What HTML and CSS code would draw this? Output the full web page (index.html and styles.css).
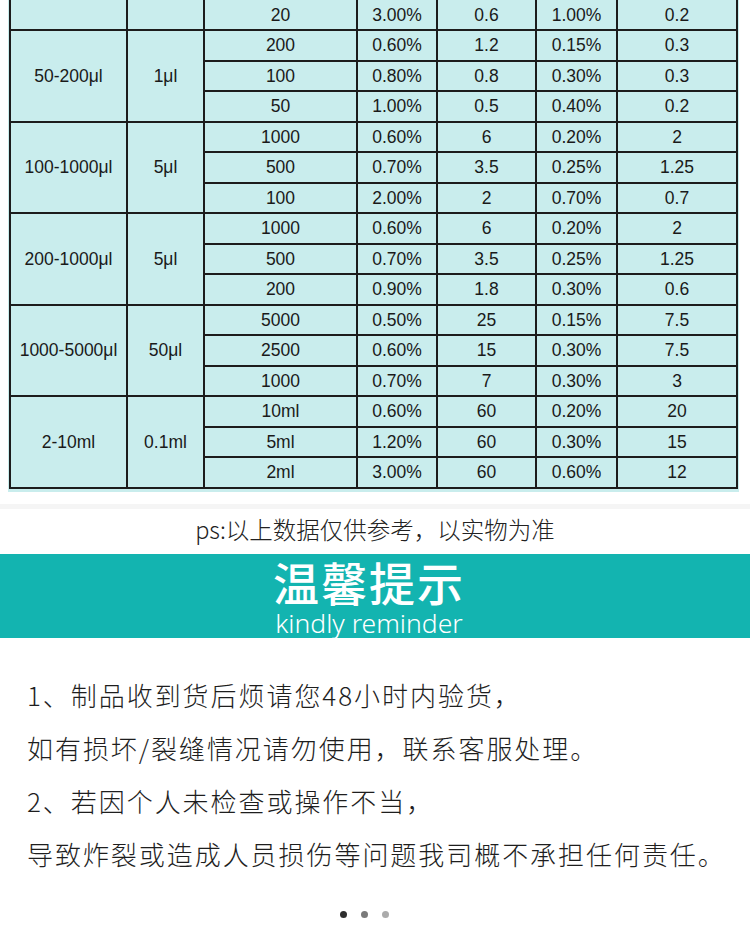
FILE: index.html
```html
<!DOCTYPE html>
<html lang="zh-CN">
<head>
<meta charset="utf-8">
<title>温馨提示</title>
<link rel="stylesheet" href="styles.css">
</head>
<body>
<div class="sheet">
<table class="spec">
<colgroup>
<col class="c1"><col class="c2"><col class="c3"><col class="c4"><col class="c5"><col class="c6"><col class="c7">
</colgroup>
<tbody>
<tr class="first"><td></td><td></td><td>20</td><td>3.00%</td><td>0.6</td><td>1.00%</td><td>0.2</td></tr>

<tr><td rowspan="3">50-200μl</td><td rowspan="3">1μl</td><td>200</td><td>0.60%</td><td>1.2</td><td>0.15%</td><td>0.3</td></tr>
<tr><td>100</td><td>0.80%</td><td>0.8</td><td>0.30%</td><td>0.3</td></tr>
<tr><td>50</td><td>1.00%</td><td>0.5</td><td>0.40%</td><td>0.2</td></tr>

<tr><td rowspan="3">100-1000μl</td><td rowspan="3">5μl</td><td>1000</td><td>0.60%</td><td>6</td><td>0.20%</td><td>2</td></tr>
<tr><td>500</td><td>0.70%</td><td>3.5</td><td>0.25%</td><td>1.25</td></tr>
<tr><td>100</td><td>2.00%</td><td>2</td><td>0.70%</td><td>0.7</td></tr>

<tr><td rowspan="3">200-1000μl</td><td rowspan="3">5μl</td><td>1000</td><td>0.60%</td><td>6</td><td>0.20%</td><td>2</td></tr>
<tr><td>500</td><td>0.70%</td><td>3.5</td><td>0.25%</td><td>1.25</td></tr>
<tr><td>200</td><td>0.90%</td><td>1.8</td><td>0.30%</td><td>0.6</td></tr>

<tr><td rowspan="3">1000-5000μl</td><td rowspan="3">50μl</td><td>5000</td><td>0.50%</td><td>25</td><td>0.15%</td><td>7.5</td></tr>
<tr><td>2500</td><td>0.60%</td><td>15</td><td>0.30%</td><td>7.5</td></tr>
<tr><td>1000</td><td>0.70%</td><td>7</td><td>0.30%</td><td>3</td></tr>

<tr><td rowspan="3">2-10ml</td><td rowspan="3">0.1ml</td><td>10ml</td><td>0.60%</td><td>60</td><td>0.20%</td><td>20</td></tr>
<tr><td>5ml</td><td>1.20%</td><td>60</td><td>0.30%</td><td>15</td></tr>
<tr><td>2ml</td><td>3.00%</td><td>60</td><td>0.60%</td><td>12</td></tr>
</tbody>
</table>
</div>
<div class="edge"></div>
<p class="note">ps:以上数据仅供参考，以实物为准</p>
<div class="banner">
<div class="banner-title">温馨提示</div>
<div class="banner-sub">kindly reminder</div>
</div>
<div class="tips">
<p>1、制品收到货后烦请您48小时内验货，</p>
<p>如有损坏/裂缝情况请勿使用，联系客服处理。</p>
<p>2、若因个人未检查或操作不当，</p>
<p>导致炸裂或造成人员损伤等问题我司概不承担任何责任。</p>
</div>
<div class="dots"><span class="d1"></span><span class="d2"></span><span class="d3"></span></div>
</body>
</html>
```
FILE: styles.css
```css
html, body {
  margin: 0;
  padding: 0;
  background: #ffffff;
}
body {
  width: 750px;
  height: 940px;
  overflow: hidden;
  font-family: "Liberation Sans", Arial, sans-serif;
}
.sheet {
  margin-left: 8px;
  width: 731px;
  box-sizing: border-box;
  padding: 0 3px 3px 1px;
  background: #c9eded;
}
.spec {
  width: 727px;
  table-layout: fixed;
  border-collapse: collapse;
  font-size: 17.5px;
  color: #1a1a1a;
}
.c1 { width: 117px; }
.c2 { width: 77px; }
.c3 { width: 153px; }
.c4 { width: 80px; }
.c5 { width: 99px; }
.c6 { width: 81px; }
.c7 { width: 120px; }
.spec tr { height: 30.53px; }
.spec tr.first { height: 30px; }
.spec td {
  border: 2px solid #1c1c1c;
  padding: 0;
  text-align: center;
  vertical-align: middle;
  line-height: 20px;
}
.spec tr.first td { border-top: none; }
.edge {
  margin-top: 12px;
  height: 5px;
  background: #f5f5f5;
}
.note {
  margin: 5px 0 0;
  text-align: center;
  font-family: "Noto Sans CJK SC", "Noto Sans", sans-serif;
  font-weight: 300;
  font-size: 23.5px;
  line-height: 30px;
  color: #222222;
}
.banner {
  margin-top: 10px;
  height: 84px;
  background: #13b4b0;
  color: #ffffff;
  text-align: center;
  padding-right: 12px;
  box-sizing: border-box;
}
.banner-title {
  padding-top: 2px;
  font-family: "Noto Sans CJK SC", sans-serif;
  font-weight: 500;
  font-size: 46px;
  line-height: 50px;
  letter-spacing: 2px;
}
.banner-sub {
  margin-top: 4px;
  font-family: "Noto Sans", "Open Sans", sans-serif;
  font-weight: 300;
  font-size: 26.5px;
  line-height: 26px;
}
.tips {
  padding: 30px 0 0 27px;
  font-family: "Noto Sans CJK SC", sans-serif;
  font-weight: 300;
  font-size: 26px;
  letter-spacing: 1.95px;
  color: #1e1e1e;
}
.tips p {
  margin: 0;
  line-height: 53px;
  white-space: nowrap;
}
.dots {
  margin-top: 31px;
  display: flex;
  justify-content: center;
  gap: 14px;
  padding-right: 22px;
}
.dots span {
  width: 7px;
  height: 7px;
  border-radius: 50%;
}
.dots .d1 { background: #2e2e2e; }
.dots .d2 { background: #7a7a7a; }
.dots .d3 { background: #ababab; }
```
